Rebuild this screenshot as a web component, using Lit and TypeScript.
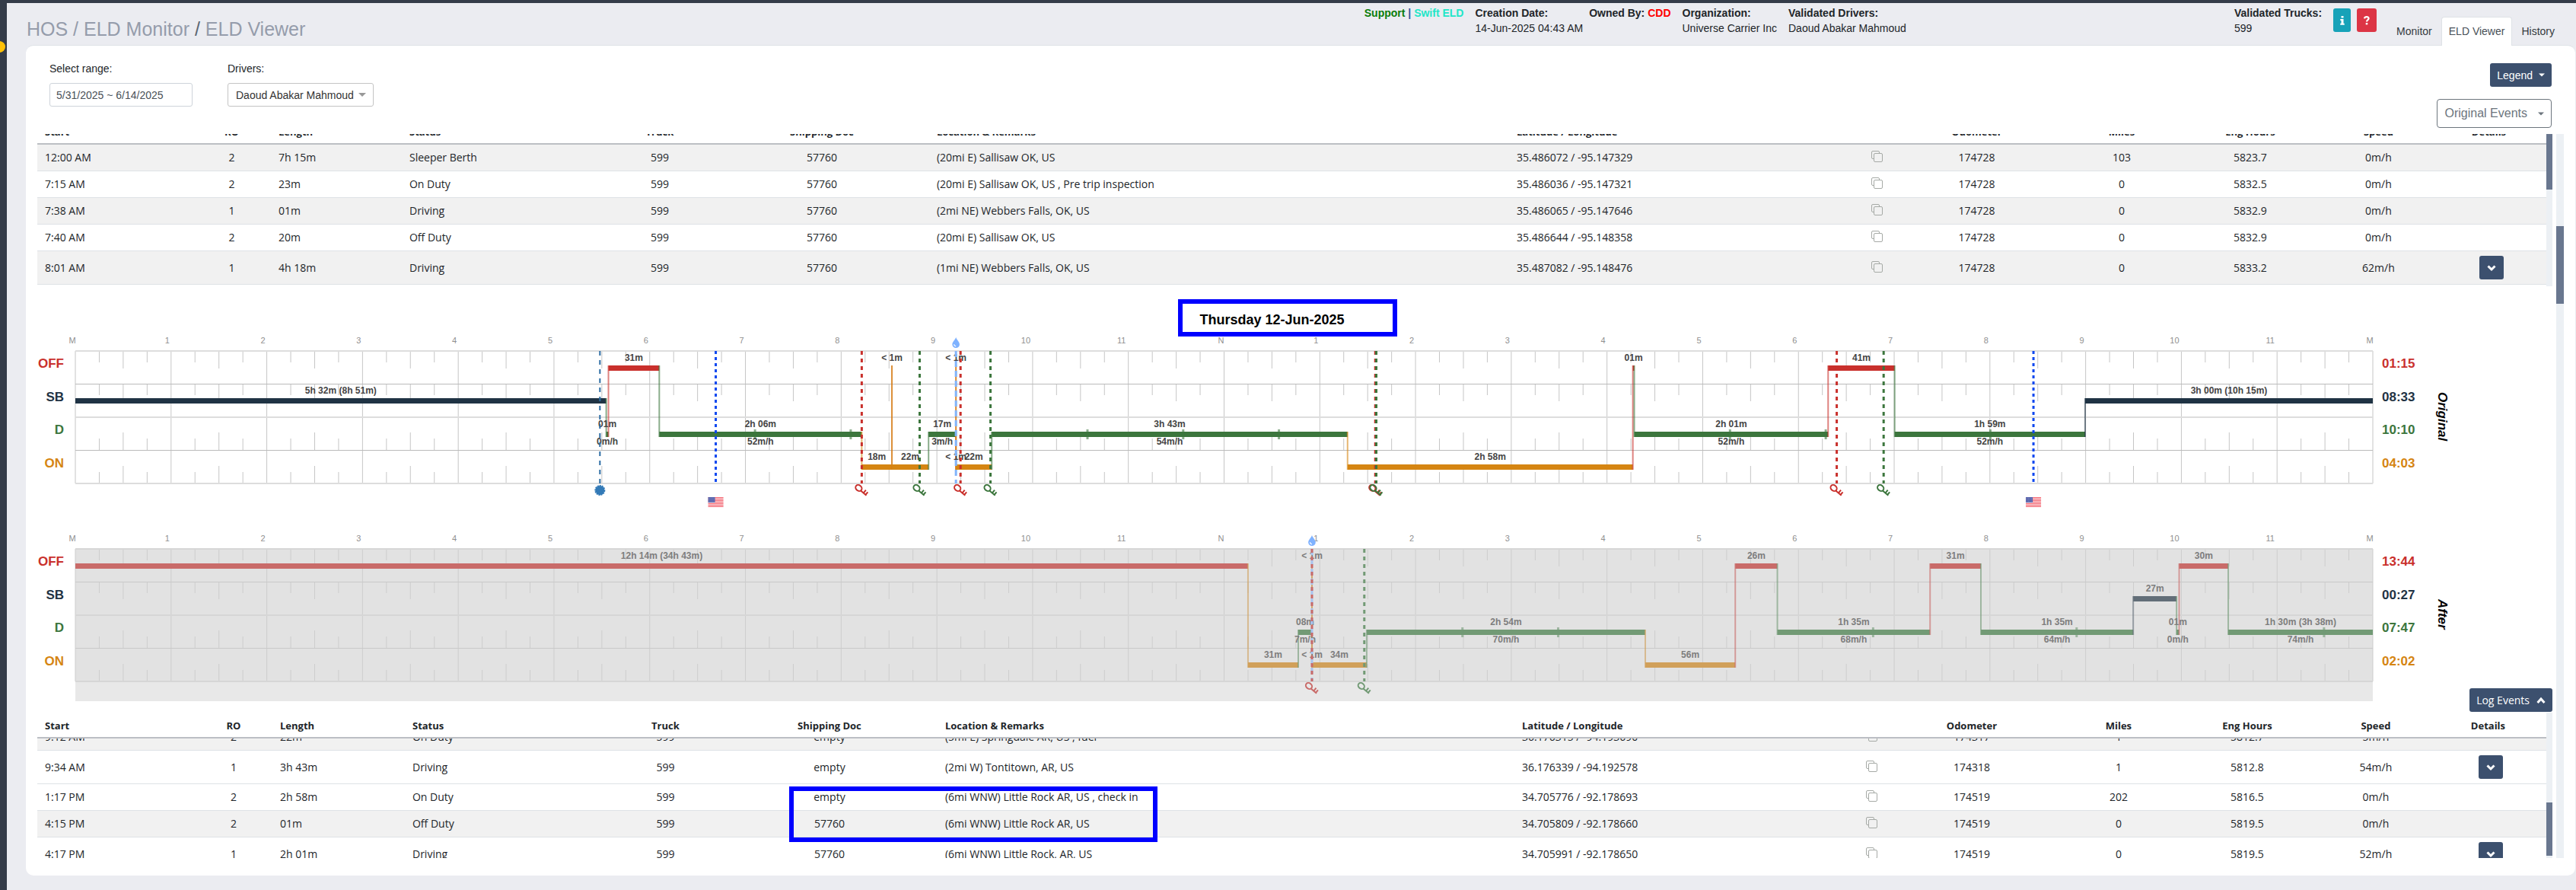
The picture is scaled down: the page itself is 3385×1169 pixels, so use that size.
import { LitElement, html, svg, css, nothing } from "lit";
import { customElement, property } from "lit/decorators.js";

type Status = "OFF" | "SB" | "D" | "ON";

interface Segment {
  status: Status;
  from: number;
  to: number;
  label?: string;
  speed?: string;
}

interface Marker {
  at: number;
  kind: "on" | "off" | "border" | "login" | "drop";
}

interface EventRow {
  start: string;
  ro: string;
  length: string;
  status: string;
  doc: string;
  place: string;
  coords: string;
  odometer: string;
  miles: string;
  hours: string;
  speed: string;
  details?: boolean;
  shaded?: boolean;
}

const ROWS: Status[] = ["OFF", "SB", "D", "ON"];
const ROW_TOP: Record<Status, number> = { OFF: 0, SB: 43, D: 87, ON: 130 };
const HOURS = ["M", "1", "2", "3", "4", "5", "6", "7", "8", "9", "10", "11", "N",
  "1", "2", "3", "4", "5", "6", "7", "8", "9", "10", "11", "M"];

const VIVID: Record<Status, string> = { OFF: "#c9302c", SB: "#1f3344", D: "#3c763d", ON: "#d58512" };
const MUTED: Record<Status, string> = { OFF: "#c96b69", SB: "#626e78", D: "#729a75", ON: "#d1a05a" };

const ORIGINAL: Segment[] = [
  { status: "SB", from: 0, to: 5.546, label: "5h 32m (8h 51m)" },
  { status: "D", from: 5.546, to: 5.569, label: "01m", speed: "0m/h" },
  { status: "OFF", from: 5.569, to: 6.1, label: "31m" },
  { status: "D", from: 6.1, to: 8.215, label: "2h 06m", speed: "52m/h" },
  { status: "ON", from: 8.215, to: 8.53, label: "18m" },
  { status: "OFF", from: 8.53, to: 8.53, label: "< 1m" },
  { status: "ON", from: 8.53, to: 8.913, label: "22m" },
  { status: "D", from: 8.913, to: 9.199, label: "17m", speed: "3m/h" },
  { status: "ON", from: 9.199, to: 9.199, label: "< 1m" },
  { status: "OFF", from: 9.199, to: 9.199, label: "< 1m" },
  { status: "ON", from: 9.199, to: 9.573, label: "22m" },
  { status: "D", from: 9.573, to: 13.29, label: "3h 43m", speed: "54m/h" },
  { status: "ON", from: 13.29, to: 16.27, label: "2h 58m" },
  { status: "OFF", from: 16.27, to: 16.285, label: "01m" },
  { status: "D", from: 16.285, to: 18.31, label: "2h 01m", speed: "52m/h" },
  { status: "OFF", from: 18.31, to: 19.005, label: "41m" },
  { status: "D", from: 19.005, to: 20.995, label: "1h 59m", speed: "52m/h" },
  { status: "SB", from: 20.995, to: 24, label: "3h 00m (10h 15m)" },
];

const ORIGINAL_MARKERS: Marker[] = [
  { at: 5.48, kind: "login" },
  { at: 6.69, kind: "border" },
  { at: 8.215, kind: "off" },
  { at: 8.82, kind: "on" },
  { at: 9.199, kind: "drop" },
  { at: 9.247, kind: "off" },
  { at: 9.56, kind: "on" },
  { at: 13.58, kind: "off" },
  { at: 13.59, kind: "on" },
  { at: 18.4, kind: "off" },
  { at: 18.89, kind: "on" },
  { at: 20.455, kind: "border" },
];

const AFTER: Segment[] = [
  { status: "OFF", from: 0, to: 12.25, label: "12h 14m (34h 43m)" },
  { status: "ON", from: 12.25, to: 12.775, label: "31m" },
  { status: "D", from: 12.775, to: 12.918, label: "08m", speed: "7m/h" },
  { status: "ON", from: 12.918, to: 12.918, label: "< 1m" },
  { status: "OFF", from: 12.918, to: 12.918, label: "< 1m" },
  { status: "ON", from: 12.918, to: 13.49, label: "34m" },
  { status: "D", from: 13.49, to: 16.4, label: "2h 54m", speed: "70m/h" },
  { status: "ON", from: 16.4, to: 17.34, label: "56m" },
  { status: "OFF", from: 17.34, to: 17.78, label: "26m" },
  { status: "D", from: 17.78, to: 19.375, label: "1h 35m", speed: "68m/h" },
  { status: "OFF", from: 19.375, to: 19.906, label: "31m" },
  { status: "D", from: 19.906, to: 21.497, label: "1h 35m", speed: "64m/h" },
  { status: "SB", from: 21.497, to: 21.95, label: "27m" },
  { status: "D", from: 21.95, to: 21.977, label: "01m", speed: "0m/h" },
  { status: "OFF", from: 21.977, to: 22.49, label: "30m" },
  { status: "D", from: 22.49, to: 24, label: "1h 30m (3h 38m)", speed: "74m/h" },
];

const AFTER_MARKERS: Marker[] = [
  { at: 12.918, kind: "drop" },
  { at: 12.918, kind: "off" },
  { at: 13.465, kind: "on" },
];

const TOP_EVENTS: EventRow[] = [
  { start: "12:00 AM", ro: "2", length: "7h 15m", status: "Sleeper Berth", doc: "57760", place: "(20mi E) Sallisaw OK, US", coords: "35.486072 / -95.147329", odometer: "174728", miles: "103", hours: "5823.7", speed: "0m/h", shaded: true },
  { start: "7:15 AM", ro: "2", length: "23m", status: "On Duty", doc: "57760", place: "(20mi E) Sallisaw OK, US , Pre trip inspection", coords: "35.486036 / -95.147321", odometer: "174728", miles: "0", hours: "5832.5", speed: "0m/h" },
  { start: "7:38 AM", ro: "1", length: "01m", status: "Driving", doc: "57760", place: "(2mi NE) Webbers Falls, OK, US", coords: "35.486065 / -95.147646", odometer: "174728", miles: "0", hours: "5832.9", speed: "0m/h", shaded: true },
  { start: "7:40 AM", ro: "2", length: "20m", status: "Off Duty", doc: "57760", place: "(20mi E) Sallisaw OK, US", coords: "35.486644 / -95.148358", odometer: "174728", miles: "0", hours: "5832.9", speed: "0m/h" },
  { start: "8:01 AM", ro: "1", length: "4h 18m", status: "Driving", doc: "57760", place: "(1mi NE) Webbers Falls, OK, US", coords: "35.487082 / -95.148476", odometer: "174728", miles: "0", hours: "5833.2", speed: "62m/h", details: true, shaded: true },
];

const BOTTOM_EVENTS: EventRow[] = [
  { start: "9:12 AM", ro: "2", length: "22m", status: "On Duty", doc: "empty", place: "(5mi E) Springdale AR, US , fuel", coords: "36.176315 / -94.193690", odometer: "174317", miles: "1", hours: "5812.7", speed: "5m/h", shaded: true },
  { start: "9:34 AM", ro: "1", length: "3h 43m", status: "Driving", doc: "empty", place: "(2mi W) Tontitown, AR, US", coords: "36.176339 / -94.192578", odometer: "174318", miles: "1", hours: "5812.8", speed: "54m/h", details: true },
  { start: "1:17 PM", ro: "2", length: "2h 58m", status: "On Duty", doc: "empty", place: "(6mi WNW) Little Rock AR, US , check in", coords: "34.705776 / -92.178693", odometer: "174519", miles: "202", hours: "5816.5", speed: "0m/h" },
  { start: "4:15 PM", ro: "2", length: "01m", status: "Off Duty", doc: "57760", place: "(6mi WNW) Little Rock AR, US", coords: "34.705809 / -92.178660", odometer: "174519", miles: "0", hours: "5819.5", speed: "0m/h", shaded: true },
  { start: "4:17 PM", ro: "1", length: "2h 01m", status: "Driving", doc: "57760", place: "(6mi WNW) Little Rock, AR, US", coords: "34.705991 / -92.178650", odometer: "174519", miles: "0", hours: "5819.5", speed: "52m/h", details: true },
];

const TOP_COLUMNS = [204, 103, 172, 267, 144, 282, 762, 466, 36, 225, 156, 182, 155, 143];
const BOTTOM_COLUMNS = [207, 102, 174, 269, 147, 284, 758, 453, 34, 228, 158, 180, 158, 145];

const pct = (hour: number) => `${((hour / 24) * 100).toFixed(3)}%`;

const chevron = (up = false) => html`
  <svg width="14" height="10" viewBox="0 0 14 10" aria-hidden="true">
    <path d=${up ? "M2.5 8 L7 3 L11.5 8" : "M2.5 2.5 L7 7 L11.5 2.5"} fill="none" stroke="#fff" stroke-width="3"></path>
  </svg>`;

@customElement("day-chart")
export class DayChart extends LitElement {
  @property({ attribute: false }) segments: Segment[] = [];
  @property({ attribute: false }) markers: Marker[] = [];
  @property({ attribute: false }) totals: string[] = [];
  @property() caption = "";
  @property({ type: Boolean }) muted = false;

  static styles = css`
    :host { display: block; padding-top: 25px; }
    .chart { display: grid; grid-template-columns: 50px 1fr 236px; }
    .plot { display: block; width: 100%; height: 201px; overflow: visible; }
    .names, .totals { display: flex; flex-direction: column; height: 174px; font-weight: 700; font-size: 17px; line-height: 36px; }
    .names { text-align: right; padding-right: 15px; }
    .names > *, .totals > * { flex: 1; }
    .side { display: flex; height: 174px; padding-left: 12px; gap: 26px; }
    .caption { writing-mode: vertical-rl; text-align: center; font-weight: 700; font-style: italic; font-size: 17px; line-height: 20px; color: #000; }
    .off { color: #c9302c; }
    .sb { color: #1f3344; }
    .d { color: #3c763d; }
    .on { color: #d58512; }
    text { font-family: "Liberation Sans", Arial, sans-serif; text-anchor: middle; }
    .hour { font-size: 11px; fill: #8f8f8f; }
    .tag { font-size: 12px; font-weight: 700; fill: #444; }
    .muted .tag { fill: #7d7d7d; }
  `;

  private grid() {
    const line = this.muted ? "#cdcdcd" : "#c6c6c6";
    const soft = this.muted ? "#d6d6d6" : "#dddddd";
    const firm = this.muted ? "#c9c9c9" : "#bbbbbb";
    const ticks = [];
    for (let q = 0; q <= 96; q++) {
      const x = pct(q / 4);
      if (q % 4 === 0) {
        ticks.push(svg`<line x1=${x} x2=${x} y1="1" y2="175" stroke=${line}></line>`);
        continue;
      }
      const size = q % 2 === 0 ? 23 : 15;
      ticks.push(svg`
        <line x1=${x} x2=${x} y1="1" y2=${1 + size} stroke=${line}></line>
        <line x1=${x} x2=${x} y1="44" y2=${44 + size} stroke=${line}></line>
        <line x1=${x} x2=${x} y1="131" y2=${131 - size} stroke=${line}></line>
        <line x1=${x} x2=${x} y1="175" y2=${175 - size} stroke=${line}></line>`);
    }
    return svg`
      ${this.muted ? svg`
        <rect x="0" y="0" width="100%" height="201" fill="#e8e8e8"></rect>
        <rect x="0" y="0" width="100%" height="175" fill="#e2e2e2"></rect>` : nothing}
      ${ticks}
      <rect x="0" y="0" width="100%" height="2" fill=${soft}></rect>
      <rect x="0" y="44" width="100%" height="1" fill=${firm}></rect>
      <rect x="0" y="87" width="100%" height="2" fill=${soft}></rect>
      <rect x="0" y="131" width="100%" height="1" fill=${firm}></rect>
      <rect x="0" y="174" width="100%" height="2" fill=${soft}></rect>`;
  }

  private hours() {
    return HOURS.map((name, i) => {
      const shift = /[MN]/.test(name) ? -4 : name.length > 1 ? -9 : -5;
      return svg`<text class="hour" x=${pct(i)} dx=${shift} y="-9">${name}</text>`;
    });
  }

  private bars() {
    const colors = this.muted ? MUTED : VIVID;
    const instant = this.muted ? "#d1906a" : "#d4601c";
    return this.segments.map((s, i) => {
      const y = ROW_TOP[s.status] + 20;
      const fill = colors[s.status];
      const prev = this.segments[i - 1];
      const hourMarks = [];
      if (s.status === "D") {
        for (let h = s.from + 1; h < s.to; h++) {
          hourMarks.push(svg`<line x1=${pct(h)} x2=${pct(h)} y1="104" y2="117" stroke=${fill} stroke-width="3" stroke-opacity="0.6"></line>`);
        }
      }
      const prevY = prev ? ROW_TOP[prev.status] + 20 : 0;
      return svg`
        ${prev ? svg`<line x1=${pct(s.from)} x2=${pct(s.from)} y1=${Math.min(prevY, y)} y2=${Math.max(prevY, y) + 7}
          stroke=${s.from === s.to ? instant : fill} stroke-width="2" stroke-opacity="0.6"></line>` : nothing}
        ${s.to > s.from ? svg`<rect x=${pct(s.from)} y=${y} width=${pct(s.to - s.from)} height="7" fill=${fill}></rect>` : nothing}
        ${hourMarks}`;
    });
  }

  private tags() {
    return this.segments.map((s) => {
      const x = pct((s.from + s.to) / 2);
      return svg`
        ${s.label ? svg`<text class="tag" x=${x} y=${ROW_TOP[s.status] + 14}>${s.label}</text>` : nothing}
        ${s.speed ? svg`<text class="tag" x=${x} y="124">${s.speed}</text>` : nothing}`;
    });
  }

  private marker(m: Marker) {
    const colors = this.muted ? MUTED : VIVID;
    const x = pct(m.at);
    const rule = (stroke: string, dash: string, width: number) =>
      svg`<line x1=${x} x2=${x} y1="1" y2="175" stroke=${stroke} stroke-width=${width} stroke-dasharray=${dash}></line>`;
    switch (m.kind) {
      case "login":
        return svg`${rule("#2b6ca3", "6 6", 2)}
          <svg x=${x} y="184" overflow="visible">
            <circle r="6" fill="#337ab7"></circle>
            <circle r="6" fill="none" stroke="#337ab7" stroke-width="2" stroke-dasharray="2 1"></circle>
          </svg>`;
      case "border":
        return svg`${rule("#0f48f0", "4 4", 3)}
          <svg x=${x} y="193" overflow="visible">
            <rect x="-10" y="0" width="20" height="13" fill="#fbdcdf"></rect>
            ${[0, 2, 4, 6, 8, 10, 12].map((y) => svg`<rect x="-10" y=${y} width="20" height="1" fill="#f4636f"></rect>`)}
            <rect x="-10" y="0" width="9" height="7" fill="#525fa9"></rect>
            <path d="M-9 1.5h7M-9 3.5h7M-9 5.5h7" stroke="#8a93c8" stroke-width="1" stroke-dasharray="1 1"></path>
          </svg>`;
      case "drop":
        return svg`${rule(this.muted ? "#a9c3ee" : "#82b4fb", "8 5", 3)}
          <svg x=${x} y="-17" overflow="visible">
            <path d="M0 0C1.5 4 4.8 6 4.8 9.4A4.8 4.6 0 0 1 -4.8 9.4C-4.8 6 -1.5 4 0 0Z" fill="#7fb2ff"></path>
            <path d="M-2.4 9.2A2.4 2.4 0 0 0 0 11.6" fill="none" stroke="#fff" stroke-width="1.3"></path>
          </svg>`;
      default: {
        const stroke = m.kind === "on" ? colors.D : colors.OFF;
        return svg`${rule(stroke, "5 5", 3)}
          <svg x=${x} y="182" overflow="visible">
            <g transform="translate(-4 -1) rotate(40)" fill="none" stroke=${stroke} stroke-width="2">
              <ellipse rx="4.4" ry="3.6"></ellipse>
              <path d="M4 1H14M9 1V-4M12.6 1V-3.6"></path>
            </g>
          </svg>`;
      }
    }
  }

  render() {
    return html`
      <div class="chart ${this.muted ? "muted" : ""}">
        <div class="names">${ROWS.map((r) => html`<span class=${r.toLowerCase()}>${r}</span>`)}</div>
        <svg class="plot" role="img" aria-label="${this.caption} duty status">
          ${this.grid()} ${this.hours()} ${this.bars()} ${this.tags()} ${this.markers.map((m) => this.marker(m))}
        </svg>
        <div class="side">
          <div class="totals">${this.totals.map((t, i) => html`<span class=${ROWS[i].toLowerCase()}>${t}</span>`)}</div>
          <div class="caption">${this.caption}</div>
        </div>
      </div>`;
  }
}

@customElement("event-table")
export class EventTable extends LitElement {
  @property({ attribute: false }) rows: EventRow[] = [];
  @property({ attribute: false }) columns: number[] = [];
  @property({ type: Number }) offset = 0;
  @property({ type: Boolean }) pinned = false;

  static styles = css`
    :host { display: block; }
    .pane { display: grid; grid-template-columns: 1fr 8px; height: 100%; }
    .scroll { overflow-y: auto; scrollbar-width: none; min-height: 0; }
    .track { background: #ecf0f4; display: flex; flex-direction: column; }
    .thumb { background: #69778f; height: 73px; }
    .low .track { justify-content: flex-end; padding-bottom: 3px; }
    .low .thumb { height: 70px; }
    table { width: 100%; table-layout: fixed; border-collapse: separate; border-spacing: 0; margin-bottom: 4px;
      font-family: "Open Sans", "Segoe UI", sans-serif; font-size: 14px; line-height: 20px; color: #212529; }
    th, td { box-sizing: border-box; padding: 0 10px; text-align: left; white-space: nowrap; vertical-align: middle; }
    th { height: 34px; padding-top: 2px; font-size: 13px; font-weight: 700; background: #fff; border-bottom: 2px solid #bcbfc4; }
    .pinned th { position: sticky; top: 0; z-index: 1; }
    td { height: 35px; border-bottom: 1px solid #dee2e6; }
    .tall td { height: 44px; }
    .shaded td { background: #f1f1f1; }
    th.mid, td.mid { text-align: center; }
    td.icon { padding: 0; text-align: center; }
    th.last { padding-right: 18px; }
    button { border: 0; padding: 0; background: none; cursor: pointer; font: inherit; }
    .copy { display: inline-flex; padding-bottom: 4px; vertical-align: middle; }
    .more { display: inline-flex; align-items: center; justify-content: center; width: 32px; height: 31px; border-radius: 3px; background: #3c506e; vertical-align: middle; }
  `;

  firstUpdated() {
    const scroll = this.renderRoot.querySelector(".scroll");
    if (scroll) scroll.scrollTop = this.offset;
  }

  private row(r: EventRow) {
    return html`
      <tr class="${r.details ? "tall" : ""} ${r.shaded ? "shaded" : ""}">
        <td>${r.start}</td>
        <td class="mid">${r.ro}</td>
        <td>${r.length}</td>
        <td>${r.status}</td>
        <td class="mid">599</td>
        <td class="mid">${r.doc}</td>
        <td>${r.place}</td>
        <td>${r.coords}</td>
        <td class="icon">
          <button class="copy" aria-label="Copy coordinates">
            <svg width="15" height="15" viewBox="0 0 15 15" fill="none" stroke="#a6aaa6">
              <path d="M3.5 10.5H2Q0.5 10.5 0.5 9V2Q0.5 0.5 2 0.5H9Q10.5 0.5 10.5 2V3.5"></path>
              <rect x="3.5" y="3.5" width="11" height="11" rx="1.5"></rect>
            </svg>
          </button>
        </td>
        <td class="mid">${r.odometer}</td>
        <td class="mid">${r.miles}</td>
        <td class="mid">${r.hours}</td>
        <td class="mid">${r.speed}</td>
        <td class="mid">${r.details ? html`<button class="more" aria-label="Details">${chevron()}</button>` : nothing}</td>
      </tr>`;
  }

  render() {
    const total = this.columns.reduce((a, b) => a + b, 0);
    return html`
      <div class="pane ${this.pinned ? "low" : ""}">
        <div class="scroll">
          <table class=${this.pinned ? "pinned" : ""}>
            <colgroup>${this.columns.map((c) => html`<col style="width:${((c / total) * 100).toFixed(3)}%">`)}</colgroup>
            <thead>
              <tr>
                <th>Start</th><th class="mid">RO</th><th>Length</th><th>Status</th><th class="mid">Truck</th>
                <th class="mid">Shipping Doc</th><th>Location &amp; Remarks</th><th>Latitude / Longitude</th><th></th>
                <th class="mid">Odometer</th><th class="mid">Miles</th><th class="mid">Eng Hours</th>
                <th class="mid">Speed</th><th class="mid last">Details</th>
              </tr>
            </thead>
            <tbody>${this.rows.map((r) => this.row(r))}</tbody>
          </table>
        </div>
        <div class="track"><div class="thumb"></div></div>
      </div>`;
  }
}

@customElement("app-root")
export class AppRoot extends LitElement {
  static styles = css`
    :host { display: block; font-family: "Liberation Sans", Arial, sans-serif; font-size: 14px; line-height: 20px; color: #212529; }
    .shell { display: flex; min-height: 100vh; box-sizing: border-box; border-top: 4px solid #343c49; background: #ebecf1; }
    .rail { position: relative; width: 9px; background: #343c49; overflow: hidden; }
    .bubble { position: absolute; left: -9px; top: 50px; width: 16px; height: 15px; border-radius: 8px; background: #ffc107; }
    .main { flex: 1; min-width: 0; padding-bottom: 19px; }
    header { display: flex; height: 56px; padding: 0 18px 0 26px; }
    h1 { flex: 3 1 0; margin: 0; padding-top: 19px; font-size: 25px; line-height: 30px; font-weight: 400; color: #959cab; white-space: nowrap; }
    h1 a { color: inherit; text-decoration: none; }
    h1 .sep { color: #5c6672; }
    .facts { display: contents; }
    .fact { padding: 3px 15px 0 0; white-space: nowrap; line-height: 20px; }
    .fact.tight { padding-right: 8px; }
    .fact.wide { flex: 1 1 0; padding-right: 0; }
    .fact b { display: block; }
    .support { color: #0a7d0a; }
    .bar { color: #2c5aa0; }
    .brand { color: #22e6c8; }
    .owner { color: #f00; }
    .badges { display: flex; gap: 8px; padding: 7px 16px 0 0; }
    .badge { display: flex; align-items: center; justify-content: center; height: 31px; width: 23px; padding: 0; border: 0; border-radius: 3px; background: #17a2b8; }
    .badge.help { width: 26px; background: #dc3545; }
    nav { display: flex; gap: 2px; align-items: flex-end; }
    nav a { box-sizing: border-box; height: 38px; padding: 8px 9px 0; border: 1px solid transparent; border-bottom: 0; color: #343a40; text-decoration: none; white-space: nowrap; }
    nav a.current { color: #495057; background: #fff; border-color: #dee2e6; border-radius: 4px 4px 0 0; position: relative; z-index: 1; }
    .card { margin: -1px 1px 0 25px; border-top: 1px solid #dee2e6; border-radius: 10px; background: #fff; padding-bottom: 23px; }
    .tools { display: flex; justify-content: space-between; padding: 20px 31px 8px; }
    .fields { display: flex; gap: 46px; }
    .field { display: flex; flex-direction: column; gap: 9px; }
    input, select { box-sizing: border-box; height: 31px; border: 1px solid #ced4da; border-radius: 3px; background: #fff; font: inherit; color: #495057; margin: 0; }
    input { width: 188px; padding: 0 8px; }
    .picker { position: relative; display: flex; }
    select { appearance: none; width: 192px; padding: 0 10px; color: #333; border-color: #c4c4c4; }
    .picker svg { position: absolute; right: 10px; top: 13px; pointer-events: none; }
    .actions { display: flex; flex-direction: column; align-items: flex-end; gap: 16px; padding-top: 3px; }
    .solid { display: flex; align-items: center; gap: 8px; box-sizing: border-box; height: 31px; padding: 0 9px; border: 0; border-radius: 3px; background: #3c506e; color: #fff; font: inherit; }
    .outline { display: flex; align-items: center; gap: 14px; box-sizing: border-box; height: 38px; padding: 0 9px 0 10px; border: 1px solid #6c757d; border-radius: 4px; background: #fff; color: #6c757d; font: inherit; font-size: 16px; }
    .body { display: grid; grid-template-columns: 1fr 10px; gap: 5px; padding: 0 15px; }
    .content { min-width: 0; }
    .track { background: #ecf0f4; padding-top: 121px; }
    .thumb { height: 102px; background: #69778f; }
    .upper { height: 200px; }
    .day { display: flex; justify-content: center; padding: 29px 60px 0 0; }
    h2 { position: relative; margin: 0; font-size: 18px; line-height: 30px; color: #000; }
    .frame { position: absolute; box-sizing: border-box; border: 6px solid #00f; pointer-events: none; z-index: 2; }
    .frame.date { left: -28px; top: -12px; width: 288px; height: 49px; }
    .second { margin-top: 34px; }
    .log { position: relative; display: flex; justify-content: flex-end; margin-top: -17px; padding-bottom: 1px; }
    .log .solid { font-family: "Open Sans", "Segoe UI", sans-serif; padding-right: 8px; }
    .lower { position: relative; }
    .lower event-table { height: 191px; }
    .frame.rows { left: 29.9%; top: 97px; width: 484px; height: 73px; }
  `;

  render() {
    return html`
      <div class="shell">
        <aside class="rail"><span class="bubble"></span></aside>
        <main class="main">
          <header>
            <h1><a href="#hos">HOS / ELD Monitor</a> <span class="sep">/</span> ELD Viewer</h1>
            <div class="facts">
              <div class="fact"><b><span class="support">Support</span> <span class="bar">|</span> <span class="brand">Swift ELD</span></b></div>
              <div class="fact tight"><b>Creation Date:</b>14-Jun-2025 04:43 AM</div>
              <div class="fact"><b>Owned By: <span class="owner">CDD</span></b></div>
              <div class="fact"><b>Organization:</b>Universe Carrier Inc</div>
              <div class="fact wide"><b>Validated Drivers:</b>Daoud Abakar Mahmoud</div>
              <div class="fact"><b>Validated Trucks:</b>599</div>
            </div>
            <div class="badges">
              <button class="badge" aria-label="Info">
                <svg width="6" height="12" viewBox="0 0 6 12" fill="#fff"><path d="M1.5 0h3v2.6h-3zM0.3 4h4.2v5.8h1.2v2H0.3v-2h1.2V6H0.3z"></path></svg>
              </button>
              <button class="badge help" aria-label="Help">
                <svg width="8" height="12" viewBox="0 0 8 12" fill="none" stroke="#fff" stroke-width="2.2"><path d="M1 3.4C1.4 0.4 6.6 0.4 6.6 3.3C6.6 5 4 5.2 4 7.4"></path><path d="M4 9v2.4" stroke-width="2.6"></path></svg>
              </button>
            </div>
            <nav>
              <a href="#monitor">Monitor</a>
              <a href="#viewer" class="current">ELD Viewer</a>
              <a href="#history">History</a>
            </nav>
          </header>
          <section class="card">
            <div class="tools">
              <div class="fields">
                <div class="field">
                  <label for="range">Select range:</label>
                  <input id="range" type="text" value="5/31/2025 ~ 6/14/2025">
                </div>
                <div class="field">
                  <label for="driver">Drivers:</label>
                  <div class="picker">
                    <select id="driver"><option>Daoud Abakar Mahmoud</option></select>
                    <svg width="10" height="5" viewBox="0 0 10 5"><path d="M0 0h10L5 5z" fill="#999"></path></svg>
                  </div>
                </div>
              </div>
              <div class="actions">
                <button class="solid">Legend <svg width="8" height="5" viewBox="0 0 8 5"><path d="M0 0.5h8L4 4.5z" fill="#fff"></path></svg></button>
                <button class="outline">Original Events <svg width="8" height="5" viewBox="0 0 8 5"><path d="M0 0.5h8L4 4.5z" fill="#6c757d"></path></svg></button>
              </div>
            </div>
            <div class="body">
              <div class="content">
                <event-table class="upper" .rows=${TOP_EVENTS} .columns=${TOP_COLUMNS} .offset=${20}></event-table>
                <div class="day"><h2>Thursday 12-Jun-2025<span class="frame date"></span></h2></div>
                <day-chart caption="Original" .segments=${ORIGINAL} .markers=${ORIGINAL_MARKERS} .totals=${["01:15", "08:33", "10:10", "04:03"]}></day-chart>
                <day-chart class="second" muted caption="After" .segments=${AFTER} .markers=${AFTER_MARKERS} .totals=${["13:44", "00:27", "07:47", "02:02"]}></day-chart>
                <div class="log"><button class="solid">Log Events ${chevron(true)}</button></div>
                <div class="lower">
                  <event-table pinned .rows=${BOTTOM_EVENTS} .columns=${BOTTOM_COLUMNS} .offset=${19}></event-table>
                  <span class="frame rows"></span>
                </div>
              </div>
              <div class="track"><div class="thumb"></div></div>
            </div>
          </section>
        </main>
      </div>`;
  }
}
